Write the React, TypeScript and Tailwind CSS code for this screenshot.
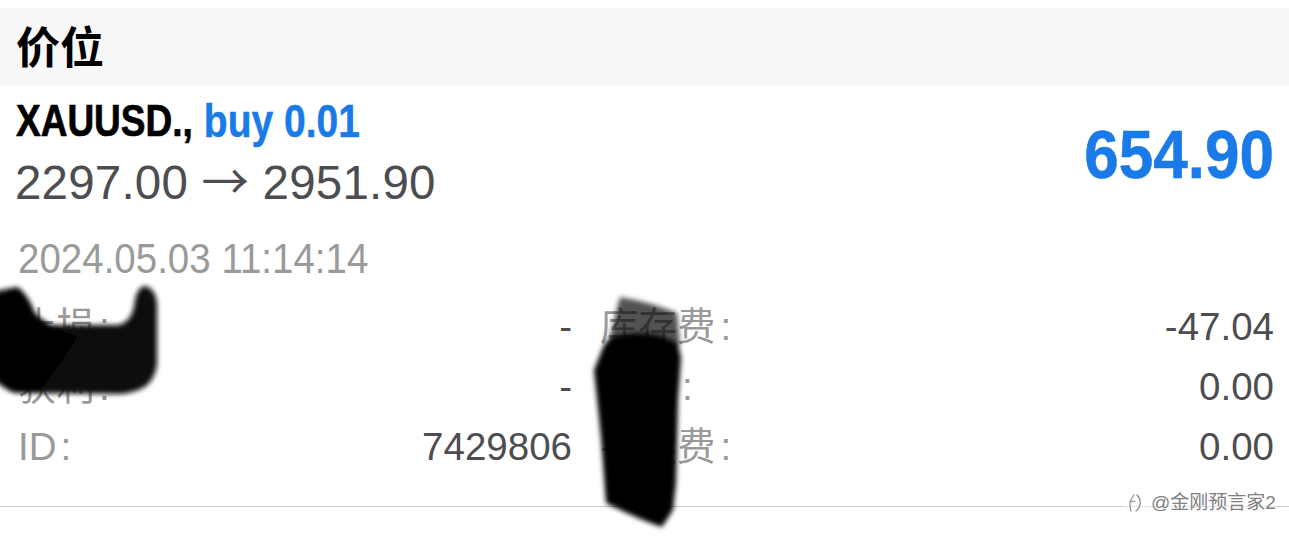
import React from 'react';

const font = 'font-["Liberation_Sans","Noto_Sans_CJK_SC",sans-serif]';

const rows = [
  ['止损', '-', '库存费', '-47.04'],
  ['获利', '-', '税金', '0.00'],
  ['ID', '7429806', '手续费', '0.00'],
];

const Scribbles = () => (
  <svg className="absolute top-0 left-0 pointer-events-none" width="1289" height="539" viewBox="0 0 1289 539">
    <defs>
      <filter id="soft" x="-10%" y="-10%" width="120%" height="120%">
        <feGaussianBlur stdDeviation="2.6" />
      </filter>
    </defs>
    <g filter="url(#soft)">
      <path d="M-10 292 L18 287 Q28 296 32 306 Q38 323 50 325 L118 325 Q133 322 135 300 Q138 286 146 286 Q156 290 157 304 L157 365 Q154 382 143 388 Q130 394 118 394 L15 393 Q4 390 -10 376 Z" fill="#0e0e0e" />
      <path d="M-4 298 L18 288 Q28 298 32 308 Q38 322 78 337 L50 378 L38 393 L14 392 L-4 378 Z" fill="#000" />
      <path d="M620 297 Q650 302 677 313 L680 345 L606 352 L616 312 Z" fill="#000" opacity="0.68" />
      <path d="M610 338 Q650 326 678 344 L681 358 L678 400 L676 483 L673 510 L662 527 Q640 520 606 503 L601 437 L594 370 L604 345 Z" fill="#000" />
    </g>
  </svg>
);

const Watermark = () => (
  <div className="absolute top-[491px] left-[1122px] flex items-center gap-[6px] bg-white/50 pl-[3px] text-[19px] leading-[24px] text-[#808080]">
    <svg width="20" height="22" viewBox="0 0 20 22" fill="none" stroke="#8a8a8a" strokeWidth="1.2" strokeLinecap="round">
      <path d="M9 3 C5 8 4 12 6 19" />
      <path d="M12 3 C17 8 16 15 11 19" />
      <path d="M5 10 L10 9" />
    </svg>
    <span className={font}>@金刚预言家2</span>
  </div>
);

export default function App() {
  return (
    <div className={`relative w-[1289px] h-[539px] overflow-hidden bg-white pt-2 ${font}`}>
      <div className="h-[77px] bg-[#f7f7f7] flex items-center pl-4 pt-1">
        <h1 className="text-[44px] leading-none font-bold text-black">价位</h1>
      </div>

      <div className="flex justify-between pl-[15px] pr-[15px] h-[186px]">
        <div className="flex flex-col">
          <div className="h-[50px] mt-[18px] ml-px flex items-end gap-[11px] whitespace-nowrap scale-y-[1.2] origin-bottom">
            <span className="text-[37px] leading-[46px] font-bold text-black [-webkit-text-stroke:0.6px_currentColor]">XAUUSD.,</span>
            <span className="text-[39px] leading-[46px] font-bold text-[#1a7ae8] [-webkit-text-stroke:0.4px_currentColor]">buy 0.01</span>
          </div>
          <div className="mt-[3px] text-[47.5px] leading-[54px] tracking-[0.2px] text-[#4d4d50] whitespace-nowrap">
            2297.00 <span className='font-["Noto_Sans_CJK_SC"]'>→</span> 2951.90
          </div>
          <div className="mt-[27px] ml-[3px] text-[38.5px] leading-[44px] text-[#9a9a9a] scale-y-[1.1] origin-left whitespace-nowrap">2024.05.03 11:14:14</div>
        </div>
        <div className="mt-[39px] text-[62px] leading-[70px] font-bold text-[#1a7ae8] scale-y-[1.1] whitespace-nowrap [-webkit-text-stroke:0.5px_currentColor]">654.90</div>
      </div>

      <div className="mt-[26px] flex flex-col">
        {rows.map((r) => (
          <div key={r[2]} className="grid grid-cols-[572px_1fr] h-[60px] items-center text-[38.5px] leading-[60px]">
            <div className="flex justify-between pl-[18px]">
              <span className="text-[#9a9a9a]">{r[0]}<span className="ml-[4px]">:</span></span>
              <span className="text-[#4d4d50]">{r[1]}</span>
            </div>
            <div className="flex justify-between pl-[28px] pr-[15px]">
              <span className="text-[#9a9a9a]">{r[2]}<span className="ml-[5px]">:</span></span>
              <span className="text-[#4d4d50]">{r[3]}</span>
            </div>
          </div>
        ))}
      </div>

      <div className="mt-[29px] h-px bg-[#c8c8c8]" />

      <Scribbles />
      <Watermark />
    </div>
  );
}
